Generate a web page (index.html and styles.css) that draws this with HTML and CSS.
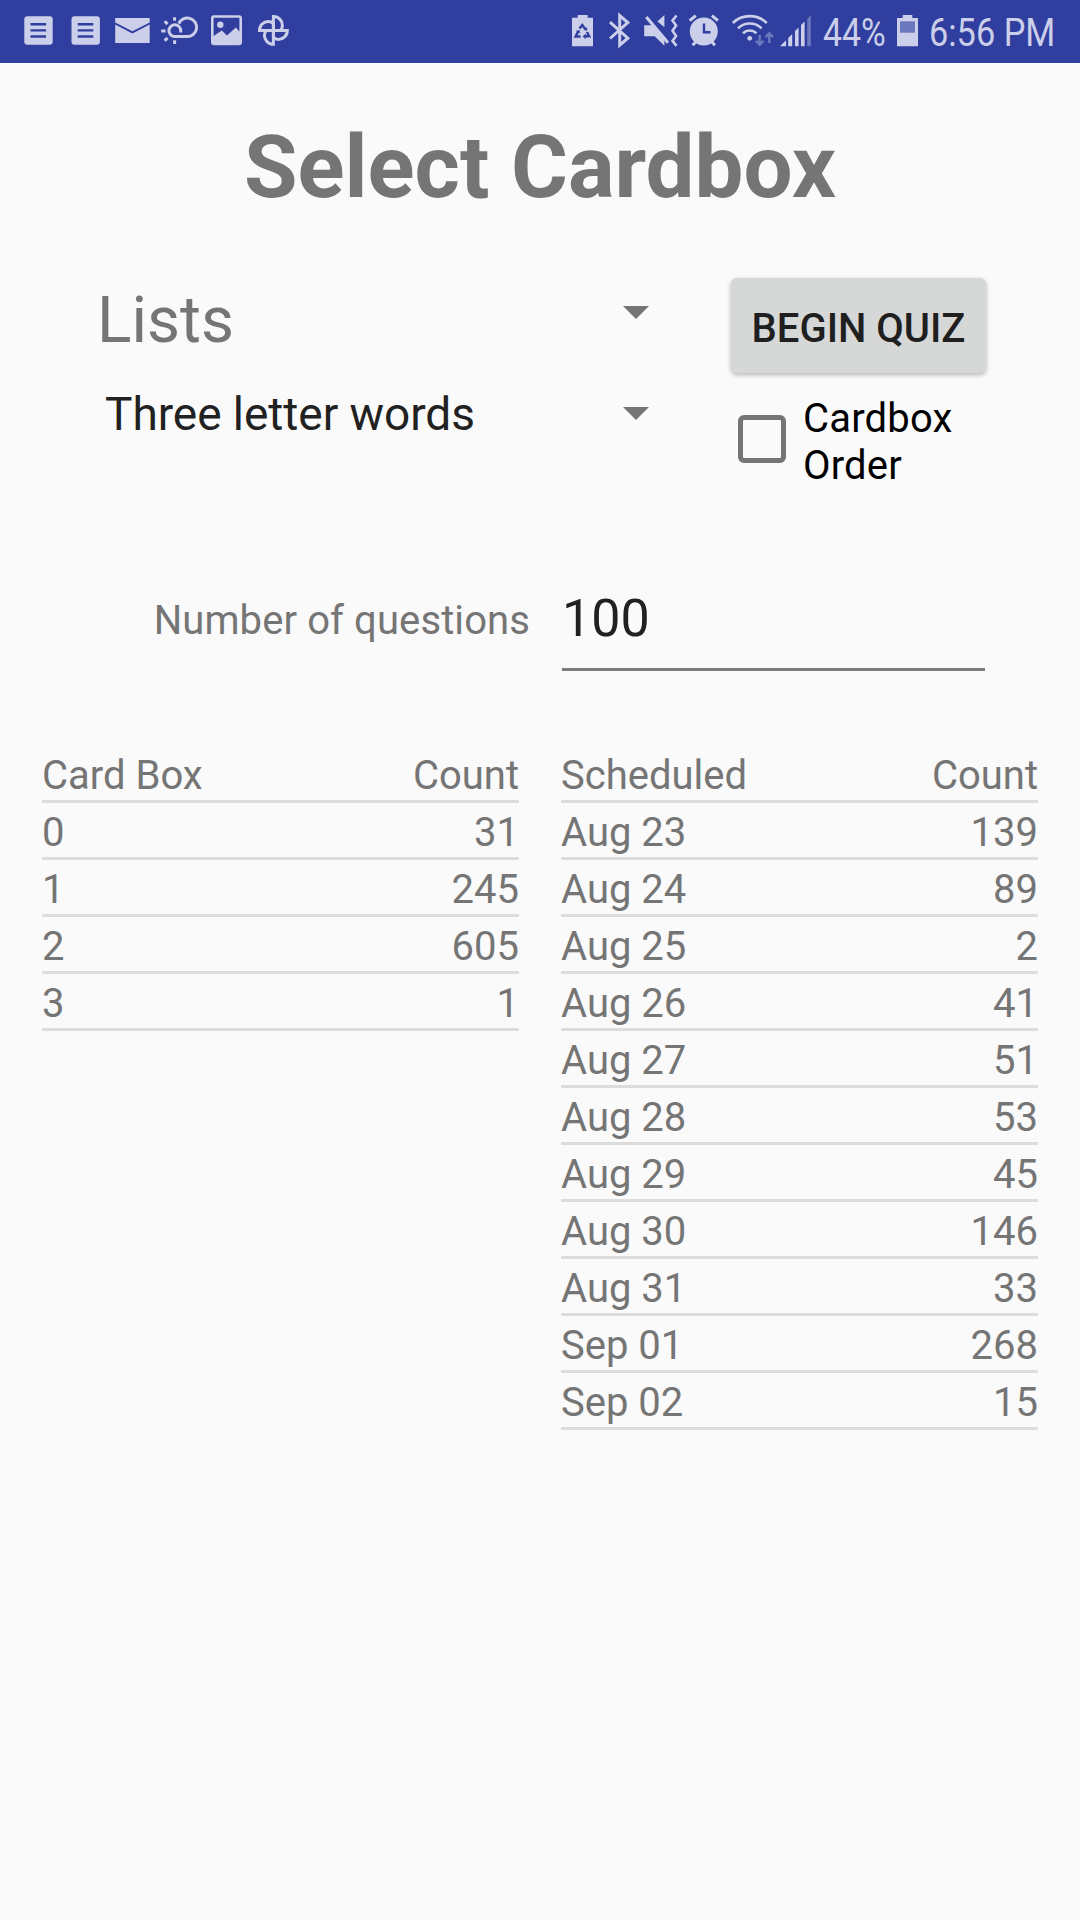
FILE: index.html
```html
<!DOCTYPE html>
<html lang="en">
<head>
  <meta charset="UTF-8">
  <meta name="viewport" content="width=device-width, initial-scale=1">
  <title>Select Cardbox</title>
  <link rel="stylesheet" href="styles.css">
</head>
<body>

<header class="statusbar">
  <div class="status-group">
    <!-- notes -->
    <svg width="47" height="63" viewBox="15 0 47 63">
      <rect x="24.3" y="16.3" width="28.4" height="28.4" rx="3"/>
      <path class="cut" d="M30.5 24.2h15.6M30.5 30.4h15.6M30.5 36.5h15.6"/>
    </svg>
    <svg width="47" height="63" viewBox="15 0 47 63">
      <rect x="24.5" y="16.3" width="28.4" height="28.4" rx="3"/>
      <path class="cut" d="M30.7 24.2h15.6M30.7 30.4h15.6M30.7 36.5h15.6"/>
    </svg>
    <!-- mail -->
    <svg width="46" height="63" viewBox="109 0 46 63">
      <path d="M115.2 18h34.5v4.6l-17.3 8.6-17.2-8.6zM115.2 24.6l17.2 8.9 17.3-8.9V43h-34.5z"/>
    </svg>
    <!-- weather -->
    <svg width="50" height="63" viewBox="155 0 50 63">
      <path class="line thick" d="M180.7 32.5v-1.2a5.9 5.9 0 1 0-5.9 5.3h12.4a9.3 9.3 0 1 0-8.4-13"/>
      <path class="line thick" d="M174.6 17.2v3.6M174.6 40.3V44M161.2 31h4.3M164.7 21.3l2.8 2.8M164.7 40.7l2.8-2.8"/>
    </svg>
    <!-- picture -->
    <svg width="45" height="63" viewBox="205 0 45 63">
      <path fill-rule="evenodd" d="M214 15.2h25a3 3 0 0 1 3 3v24a3 3 0 0 1-3 3h-25a3 3 0 0 1-3-3v-24a3 3 0 0 1 3-3zM213.6 17.8V36l8.2-5.4 5.2 5 8.8-8 3.6 3.8V17.8z"/>
      <circle cx="220.3" cy="24.7" r="3.2"/>
    </svg>
    <!-- photos -->
    <svg width="46" height="63" viewBox="250 0 46 63">
      <g class="line thick">
        <path d="M273.4 16.5c5.2 0 9 4 9 9 0 2-.8 3.6-2 4.9h-7z"/>
        <path d="M273.4 16.5c5.2 0 9 4 9 9 0 2-.8 3.6-2 4.9h-7z" transform="rotate(90 273.4 30.4)"/>
        <path d="M273.4 16.5c5.2 0 9 4 9 9 0 2-.8 3.6-2 4.9h-7z" transform="rotate(180 273.4 30.4)"/>
        <path d="M273.4 16.5c5.2 0 9 4 9 9 0 2-.8 3.6-2 4.9h-7z" transform="rotate(270 273.4 30.4)"/>
      </g>
    </svg>
  </div>

  <div class="status-group">
    <!-- power saving -->
    <svg width="36" height="63" viewBox="565 0 36 63">
      <path d="M577.7 15h10v2.8h5.3v28.5h-21V17.8h5.7z"/>
      <path class="cut" d="M579.5 28.6l2.8-3.6 3.2 4.4M587 32l2.2 4.3h-4.7M580.6 36.5h-5l2.3-4.7"/>
      <path class="notch" d="M583.4 29.8l3.6 1 .3-3.6zM585.7 33.6v5.6l-3-2.8zM575.8 31l3.7-.9.8 3.5z"/>
    </svg>
    <!-- bluetooth -->
    <svg width="36" height="63" viewBox="601 0 36 63">
      <path class="line thick" d="M610 22.2l17.800 16-8.100 7V15.500l8.100 7-17.800 16"/>
    </svg>
    <!-- muted, vibrate -->
    <svg width="48" height="63" viewBox="637 0 48 63">
      <path d="M644.2 25.2h7.5l12.7 12.4v8.1l-9.7-9.5h-10.5zM664.4 15v12.2l-7-5.700z"/>
      <path class="line thick" d="M646.3 17l21.7 25.7"/>
      <path class="line" d="M676.5 15.5l-4 5 3.6 5-3.6 5.2 3.6 5.2-3.6 5 4 5"/>
    </svg>
    <!-- alarm -->
    <svg width="42" height="63" viewBox="685 0 42 63">
      <circle cx="703.8" cy="31.5" r="14"/>
      <path class="line thick" d="M689.7 20.7l6-5M717.900 20.700l-6-5M696 41.500l-3.300 3.700M711.600 41.500l3.300 3.700"/>
      <path class="cut" d="M704 23.5v8.8h6.5"/>
    </svg>
    <!-- wifi with traffic arrows -->
    <svg width="50" height="63" viewBox="727 0 50 63">
      <path class="line" d="M732.8 23a24.5 24.5 0 0 1 34 0M738 28.4a16.8 16.8 0 0 1 23.6 0M743 33.2a9.7 9.7 0 0 1 13.4 0"/>
      <circle cx="749.7" cy="38.3" r="2.4"/>
      <path class="dim-line" d="M759.7 35v9.5M756 40.8l3.7 3.9 3.7-3.9M769.3 43v-9.5M765.6 37.2l3.7-3.9 3.7 3.9"/>
    </svg>
    <!-- signal -->
    <svg width="43" height="63" viewBox="777 0 43 63">
      <path d="M780 46.2l6-6v6zM788.2 38l4-4v12.2h-4zM795 31.1l3.6-3.6v18.7H795zM801 25.1l3.6-3.6v24.7H801z"/>
      <path class="dim" d="M807.2 18.9l3.6-3.6v30.9h-3.6z"/>
    </svg>
    <span class="percent">44%</span>
    <!-- battery -->
    <svg width="38" height="63" viewBox="889 0 38 63">
      <path d="M902.7 15h9.6v2.9h5.7v28.4h-21V17.9h5.7z"/>
      <path class="dim" d="M900 21.3h15v11.4h-15z"/>
    </svg>
    <span class="clock">6:56 PM</span>
  </div>
</header>

<main>
  <h1>Select Cardbox</h1>

  <section class="quiz-form">
    <div class="spinners">
      <div class="spinner spinner-lists">
        <span>Lists</span>
        <svg class="arrow" width="26" height="13" viewBox="0 0 26 13"><path d="M0 0h26L13 13z"/></svg>
      </div>
      <div class="spinner spinner-words">
        <span>Three letter words</span>
        <svg class="arrow" width="26" height="13" viewBox="0 0 26 13"><path d="M0 0h26L13 13z"/></svg>
      </div>
    </div>
    <div class="actions">
      <button class="begin" type="button">BEGIN QUIZ</button>
      <label class="order">
        <input type="checkbox">
        <span>Cardbox Order</span>
      </label>
    </div>
  </section>

  <section class="questions">
    <label for="questions">Number of questions</label>
    <input id="questions" type="text" value="100">
  </section>

  <section class="tables">
    <table>
      <thead>
        <tr><th>Card Box</th><th>Count</th></tr>
      </thead>
      <tbody>
        <tr><td>0</td><td>31</td></tr>
        <tr><td>1</td><td>245</td></tr>
        <tr><td>2</td><td>605</td></tr>
        <tr><td>3</td><td>1</td></tr>
      </tbody>
    </table>

    <table>
      <thead>
        <tr><th>Scheduled</th><th>Count</th></tr>
      </thead>
      <tbody>
        <tr><td>Aug 23</td><td>139</td></tr>
        <tr><td>Aug 24</td><td>89</td></tr>
        <tr><td>Aug 25</td><td>2</td></tr>
        <tr><td>Aug 26</td><td>41</td></tr>
        <tr><td>Aug 27</td><td>51</td></tr>
        <tr><td>Aug 28</td><td>53</td></tr>
        <tr><td>Aug 29</td><td>45</td></tr>
        <tr><td>Aug 30</td><td>146</td></tr>
        <tr><td>Aug 31</td><td>33</td></tr>
        <tr><td>Sep 01</td><td>268</td></tr>
        <tr><td>Sep 02</td><td>15</td></tr>
      </tbody>
    </table>
  </section>
</main>

</body>
</html>
```

FILE: styles.css
```css
* {
  box-sizing: border-box;
}

body {
  margin: 0;
  min-height: 100vh;
  font-family: Roboto, sans-serif;
  font-size: 40px;
  background-color: #fafafa;
  color: #757575;
}

/* status bar */
.statusbar {
  display: flex;
  justify-content: space-between;
  height: 63px;
  padding: 0 20px 0 15px;
  background-color: #303f9f;
  color: #cbcfe9;
}

.status-group {
  display: flex;
  align-items: center;
}

.statusbar svg {
  display: block;
  flex: none;
  fill: #cbcfe9;
}

.statusbar .cut {
  fill: none;
  stroke: #303f9f;
  stroke-width: 2.4;
}

.statusbar .notch {
  fill: #303f9f;
}

.statusbar .line {
  fill: none;
  stroke: #cbcfe9;
  stroke-width: 2.6;
}

.statusbar .thick {
  stroke-width: 3;
}

.statusbar .dim {
  fill: #6b78bd;
}

.statusbar .dim-line {
  fill: none;
  stroke: #6b78bd;
  stroke-width: 2.4;
}

.percent, .clock {
  flex: none;
  padding-top: 3px;
  font-size: 39px;
  line-height: 60px;
  white-space: nowrap;
  transform: scaleX(0.865);
  transform-origin: left center;
}

.percent {
  width: 66px;
  margin-left: 3px;
}

.clock {
  width: 131px;
  margin-left: 2px;
  transform: scaleX(0.88);
}

/* title */
h1 {
  margin: 0;
  padding-top: 54px;
  font-size: 87px;
  line-height: 100px;
  font-weight: 700;
  text-align: center;
}

/* list selection */
.quiz-form {
  display: flex;
  justify-content: space-between;
  margin-top: 61px;
  padding: 0 94px 0 97px;
}

.spinners {
  width: 552px;
  padding-top: 4px;
}

.spinner {
  display: flex;
  align-items: center;
  justify-content: space-between;
}

.spinner-lists {
  font-size: 64px;
  line-height: 78px;
}

.spinner-lists .arrow {
  margin-bottom: 17px;
}

.spinner-words {
  margin-top: 26px;
  padding-left: 8px;
  font-size: 46px;
  line-height: 56px;
  letter-spacing: -0.05px;
  color: #212121;
}

.spinner-words .arrow {
  margin-bottom: 1px;
}

.arrow {
  fill: #757575;
}

.actions {
  width: 255px;
}

.begin {
  display: block;
  width: 255px;
  height: 95px;
  padding: 5px 0 0;
  border: none;
  border-radius: 6px;
  background-color: #d6d7d7;
  box-shadow: 0 2px 5px rgba(0,0,0,0.28);
  font-family: inherit;
  font-size: 40px;
  font-weight: 500;
  color: #1f1f1f;
  white-space: nowrap;
}

.order {
  display: flex;
  align-items: center;
  margin-top: 22px;
  padding-left: 7px;
  line-height: 47px;
  letter-spacing: 0.2px;
  color: #000;
}

.order input {
  appearance: none;
  flex: none;
  width: 48px;
  height: 48px;
  margin: 0 17px 6px 0;
  border: 5px solid #757575;
  border-radius: 6px;
}

/* number of questions */
.questions {
  display: flex;
  align-items: center;
  justify-content: flex-end;
  margin-top: 94px;
  padding-right: 95px;
}

.questions label {
  margin-right: 32px;
  padding-bottom: 14px;
  line-height: 47px;
  letter-spacing: 0.1px;
}

.questions input {
  width: 423px;
  height: 88px;
  padding: 0 0 14px;
  border: none;
  border-bottom: 3px solid #7c7c7c;
  background: none;
  font-family: inherit;
  font-size: 52px;
  color: #212121;
}

/* counts */
.tables {
  display: grid;
  grid-template-columns: 477px 477px;
  column-gap: 42px;
  align-items: start;
  margin-top: 75px;
  padding-left: 42px;
}

table {
  width: 100%;
  border-collapse: separate;
  border-spacing: 0;
}

th, td {
  height: 57px;
  padding: 6px 0 1px;
  border-bottom: 3px solid #dcdcdc;
  font-weight: 400;
  line-height: 47px;
  text-align: left;
}

th:last-child, td:last-child {
  text-align: right;
}
```
